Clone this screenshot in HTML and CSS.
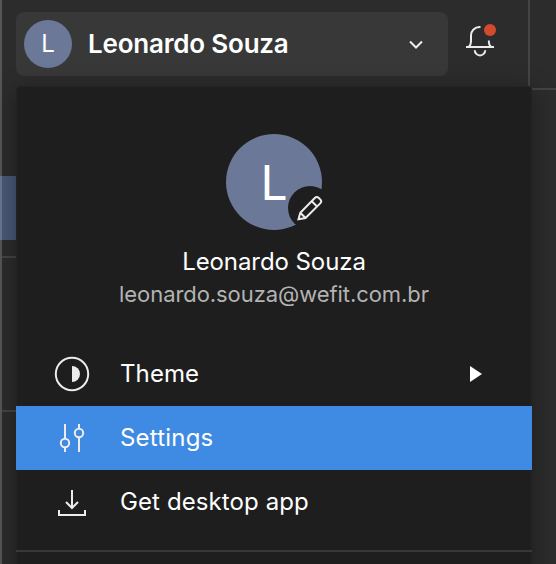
FILE: index.html
```html
<!DOCTYPE html>
<html lang="en">
<head>
<meta charset="utf-8">
<title>Account menu</title>
<link rel="stylesheet" href="styles.css">
</head>
<body>
<div class="app">
  <aside class="sidebar">
    <header class="topbar">
      <button class="account">
        <span class="avatar">L</span>
        <span class="account-name">Leonardo Souza</span>
        <svg class="chevron" width="16" height="10" viewBox="0 0 16 10"><path d="M2 1.500l6 6 6-6"/></svg>
      </button>
      <button class="bell">
        <svg width="32" height="36" viewBox="0 0 32 36">
          <path d="M16.500 5h-1a8.500 8.500 0 0 0-8.500 8.500v6c0 2-.5 3.500-2 5.200M24.900 18.500v2c0 1.500.7 3 1.900 4.200M2 25h28M10.800 28.200a5.200 5.200 0 0 0 10.400 0"/>
          <circle cx="26" cy="8" r="6"/>
        </svg>
      </button>
    </header>
    <div class="nav">
      <div class="nav-selected"></div>
      <div class="nav-group"></div>
      <div class="nav-rest"></div>
    </div>
  </aside>
  <main class="canvas"><div class="canvas-bar"></div></main>
  <section class="menu">
    <div class="profile">
      <div class="avatar avatar-large">L
        <span class="edit">
          <svg width="34" height="34" viewBox="0 0 34 34"><path d="M5.500 28.200l1.800-6.500L21.800 7q2-2 4 0l1.400 1.400q2 2 0 4L12.500 27l-7 1.200zM18.800 10.300l5.200 5.200M7.500 22l4.800 4.800"/></svg>
        </span>
      </div>
      <div class="name">Leonardo Souza</div>
      <div class="email">leonardo.souza@wefit.com.br</div>
    </div>
    <div class="item">
      <svg class="icon" width="36" height="36" viewBox="0 0 36 36"><circle cx="18" cy="18" r="16.200"/><path class="solid" d="M18 10a8 8 0 0 1 0 16z"/></svg>
      <span class="label">Theme</span>
      <svg class="arrow" width="12" height="16" viewBox="0 0 12 16"><path d="M0 0l12 8-12 8z"/></svg>
    </div>
    <div class="item active">
      <svg class="icon" width="36" height="36" viewBox="0 0 36 36"><path d="M11 4v14.500M11 27.500v4.500M25 4v4.500M25 17.500v14.500"/><circle cx="11" cy="23" r="4.200"/><circle cx="25" cy="13" r="4.200"/></svg>
      <span class="label settings">Settings</span>
    </div>
    <div class="item">
      <svg class="icon" width="36" height="36" viewBox="0 0 36 36"><path d="M18 6v17.500M12 18l6 6 6-6M5 26v5h26v-5"/></svg>
      <span class="label">Get desktop app</span>
    </div>
    <div class="separator"></div>
  </section>
</div>
</body>
</html>
```
FILE: styles.css
```css
* { box-sizing: border-box; }
body { margin: 0; background: #2c2c2c; font-family: Inter, "Liberation Sans", sans-serif; color: #fff; }
button { border: 0; padding: 0; margin: 0; font: inherit; color: inherit; background: none; }
svg { display: block; fill: none; stroke: #ececec; stroke-width: 2; }
.app { position: relative; display: flex; width: 556px; height: 564px; overflow: hidden; }
.sidebar { width: 530px; border-left: 2px solid #565656; border-right: 2px solid #444; }
.topbar { display: flex; align-items: center; height: 88px; padding: 0 0 0 14px; }
.account { display: flex; align-items: center; width: 432px; height: 64px; padding: 0 24px 0 8px; border-radius: 8px; background: #383838; }
.avatar { display: flex; align-items: center; justify-content: center; flex: none; width: 48px; height: 48px; border-radius: 50%; background: #6b7897; font-size: 24px; }
.account > .avatar { padding-bottom: 1px; }
.account-name { margin-left: 16px; margin-top: -1px; font-size: 26px; font-weight: 600; letter-spacing: -0.2px; white-space: nowrap; }
.chevron { margin-left: auto; margin-top: 2px; }
.bell { margin-left: 16px; margin-top: -9px; }
.bell circle { fill: #d24b2c; stroke: none; }
.nav { padding-top: 88px; }
.nav-selected { height: 64px; margin-left: -2px; border-left: 2px solid #69778e; background: #4a5878; }
.nav-group { height: 18px; border-bottom: 2px solid #444; }
.nav-rest { height: 154px; border-bottom: 2px solid #444; }
.canvas { flex: 1; }
.canvas-bar { height: 90px; border-bottom: 2px solid #444; }
.menu { position: absolute; left: 16px; top: 86px; width: 516px; height: 500px; border-radius: 4px; background: #1e1e1e; box-shadow: inset 0 0 0 1px #232323, inset 0 1px #383838, 0 4px 24px rgba(0, 0, 0, .35); }
.profile { display: flex; flex-direction: column; align-items: center; height: 256px; padding-top: 48px; }
.avatar-large { position: relative; width: 96px; height: 96px; font-size: 48px; }
.edit { position: absolute; left: 62px; top: 52px; width: 44px; height: 44px; padding: 5px; border-radius: 50%; background: #1e1e1e; }
.name { margin-top: 16px; font-size: 24px; line-height: 32px; letter-spacing: -.08px; white-space: nowrap; }
.email { font-size: 22px; line-height: 32px; letter-spacing: -.07px; color: #b3b3b3; white-space: nowrap; }
.item { display: flex; align-items: center; height: 64px; padding: 0 50px 0 38px; }
.active { background: #3f8ae2; }
.icon .solid { fill: #ececec; stroke: none; }
.label { margin-left: 30px; margin-top: -2px; font-size: 24px; letter-spacing: .1px; white-space: nowrap; }
.label.settings { letter-spacing: .2px; }
.arrow { margin-left: auto; }
.arrow path { fill: #fff; stroke: none; }
.separator { margin-top: 16px; height: 2px; background: #383838; }
```
